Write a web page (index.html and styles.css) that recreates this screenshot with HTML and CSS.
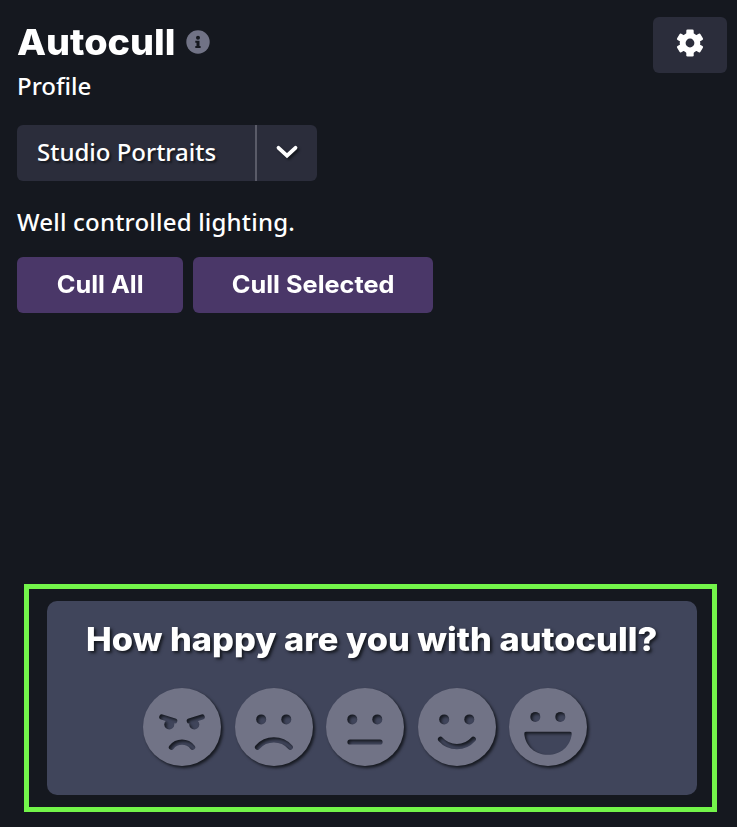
FILE: index.html
```html
<!DOCTYPE html>
<html lang="en">
<head>
<meta charset="utf-8">
<title>Autocull</title>
<link rel="stylesheet" href="styles.css">
</head>
<body>
<main class="app">
  <header class="top">
    <div class="heading">
      <h1 class="title"><span class="title-text">Autocull</span></h1>
      <svg class="info" viewBox="0 0 24 24"><circle cx="12" cy="12" r="11.7" fill="#717386"/><path fill="#15181f" d="M12 5.700a2 2 0 1 1 0 4 2 2 0 0 1 0-4zM9.300 10.800h4.200v5.300h1.100v1.900H9.300v-1.900h1.200v-3.400H9.300z"/></svg>
    </div>
    <button class="settings" aria-label="Settings">
      <svg width="28" height="28" viewBox="-14 -14 28 28"><g fill="#fff"><circle r="10.300"/><rect x="-3.700" y="-13.500" width="7.400" height="27" rx="1.300"/><rect x="-3.700" y="-13.500" width="7.400" height="27" rx="1.300" transform="rotate(60)"/><rect x="-3.700" y="-13.500" width="7.400" height="27" rx="1.300" transform="rotate(120)"/></g><circle r="4.400" fill="#2b2d3b"/></svg>
    </button>
  </header>
  <p class="label">Profile</p>
  <div class="select">
    <div class="value">Studio Portraits</div>
    <div class="arrow"><svg width="22" height="14" viewBox="0 0 22 14"><path d="M2.500 2.800 11 10.700l8.500-7.900" fill="none" stroke="#fff" stroke-width="3.800" stroke-linecap="round"/></svg></div>
  </div>
  <p class="hint">Well controlled lighting.</p>
  <div class="actions">
    <button class="cull cull-all"><span>Cull All</span></button>
    <button class="cull cull-selected"><span>Cull Selected</span></button>
  </div>
  <section class="frame">
    <div class="panel">
      <h2 class="question"><span class="question-text">How happy are you with autocull?</span></h2>
      <div class="faces">
        <svg class="face" viewBox="0 0 78 78"><mask id="m1"><rect width="78" height="78" fill="#fff"/><g class="cut"><circle cx="26.300" cy="36.500" r="5"/><circle cx="51.300" cy="36.500" r="5"/><path d="M18.800 29 31.700 32.900M59.200 29 46.300 32.900M28.400 59.300A13.500 13.500 0 0 1 49.600 59.300"/></g></mask><circle cx="39" cy="39" r="39" mask="url(#m1)"/></svg>
        <svg class="face" viewBox="0 0 78 78"><mask id="m2"><rect width="78" height="78" fill="#fff"/><g class="cut"><circle cx="26.200" cy="31.400" r="5"/><circle cx="51.300" cy="31.400" r="5"/><path d="M22.500 59.300A22 22 0 0 1 55.300 59.300"/></g></mask><circle cx="39" cy="39" r="39" mask="url(#m2)"/></svg>
        <svg class="face" viewBox="0 0 78 78"><mask id="m3"><rect width="78" height="78" fill="#fff"/><g class="cut"><circle cx="26.300" cy="31.400" r="5"/><circle cx="51.300" cy="31.400" r="5"/><path d="M24 54H54"/></g></mask><circle cx="39" cy="39" r="39" mask="url(#m3)"/></svg>
        <svg class="face" viewBox="0 0 78 78"><mask id="m4"><rect width="78" height="78" fill="#fff"/><g class="cut"><circle cx="26.200" cy="31.400" r="5"/><circle cx="51.300" cy="31.400" r="5"/><path d="M22.500 51.200A22 22 0 0 0 55.300 51.200"/></g></mask><circle cx="39" cy="39" r="39" mask="url(#m4)"/></svg>
        <svg class="face" viewBox="0 0 78 78"><mask id="m5"><rect width="78" height="78" fill="#fff"/><g class="cut"><circle cx="26.300" cy="28.900" r="5"/><circle cx="51.300" cy="28.900" r="5"/></g><path fill="#000" d="M17 43.800H61Q63 43.800 62.700 46C61.500 58.500 51.500 66.800 39 66.800S16.500 58.500 15.300 46Q15 43.800 17 43.800z"/></mask><circle cx="39" cy="39" r="39" mask="url(#m5)"/></svg>
      </div>
    </div>
  </section>
</main>
</body>
</html>
```
FILE: styles.css
```css
* { box-sizing: border-box; }
body { margin: 0; background: #15181f; color: #fff; font-family: "Noto Sans", sans-serif; }
h1, h2, p { margin: 0; white-space: nowrap; }
button { border: 0; padding: 0; color: #fff; display: flex; align-items: center; justify-content: center; }
span { display: inline-block; }
.app { height: 827px; padding: 17px 10px 15px 17px; display: flex; flex-direction: column; }
.top { display: flex; justify-content: space-between; height: 56px; }
.heading { display: flex; align-items: center; height: 50px; }
.title { width: 169px; font: 800 36px/50px Inter, sans-serif; }
.title-text { transform: scaleX(1.05); transform-origin: left; }
.info { width: 24px; height: 24px; }
.settings { width: 74px; height: 56px; border-radius: 6px; background: #2b2d3b; }
.settings svg { margin-bottom: 5px; }
.label { height: 34px; margin-top: -4px; font-size: 24px; line-height: 34px; font-weight: 500; }
.select { display: flex; width: 300px; height: 56px; margin-top: 22px; border-radius: 6px; background: #2b2d3b; }
.value { width: 240px; padding-left: 20px; border-right: 2px solid #5a5b68; font-size: 24px; font-weight: 500; line-height: 54px; white-space: nowrap; text-shadow: 2px 2px 2px #15181f; }
.arrow { flex: 1; display: flex; align-items: center; justify-content: center; }
.arrow svg { margin-bottom: 2px; overflow: visible; filter: drop-shadow(2px 2px 1px #15181f); }
.hint { height: 34px; margin-top: 24px; font-size: 24px; line-height: 34px; font-weight: 500; letter-spacing: .2px; }
.actions { display: flex; gap: 10px; margin-top: 18px; }
.cull { height: 56px; border-radius: 6px; background: #4a3768; font: 650 24px/54px Inter, sans-serif; white-space: nowrap; }
.cull span { transform: scaleX(1.055); }
.cull-all { width: 166px; }
.cull-selected { width: 240px; }
.frame { width: 693px; height: 228px; margin: auto 0 0 7px; padding: 12px 15px 12px 18px; border: 5px solid #73f54a; }
.panel { width: 650px; height: 194px; border-radius: 10px; background: #40455b; }
.question { height: 87px; text-align: center; font: 800 32px/77px Inter, sans-serif; text-shadow: 2px 2px 3px #15181f; }
.question-text { transform: scaleX(1.075); }
.faces { display: flex; gap: 13.500px; padding-left: 96px; }
.face { width: 78px; height: 78px; overflow: visible; fill: #717386; filter: drop-shadow(2px 2px 1.500px #15181f); }
.cut { fill: #000; }
.cut path { fill: none; stroke: #000; stroke-width: 5.200px; stroke-linecap: round; }
```
